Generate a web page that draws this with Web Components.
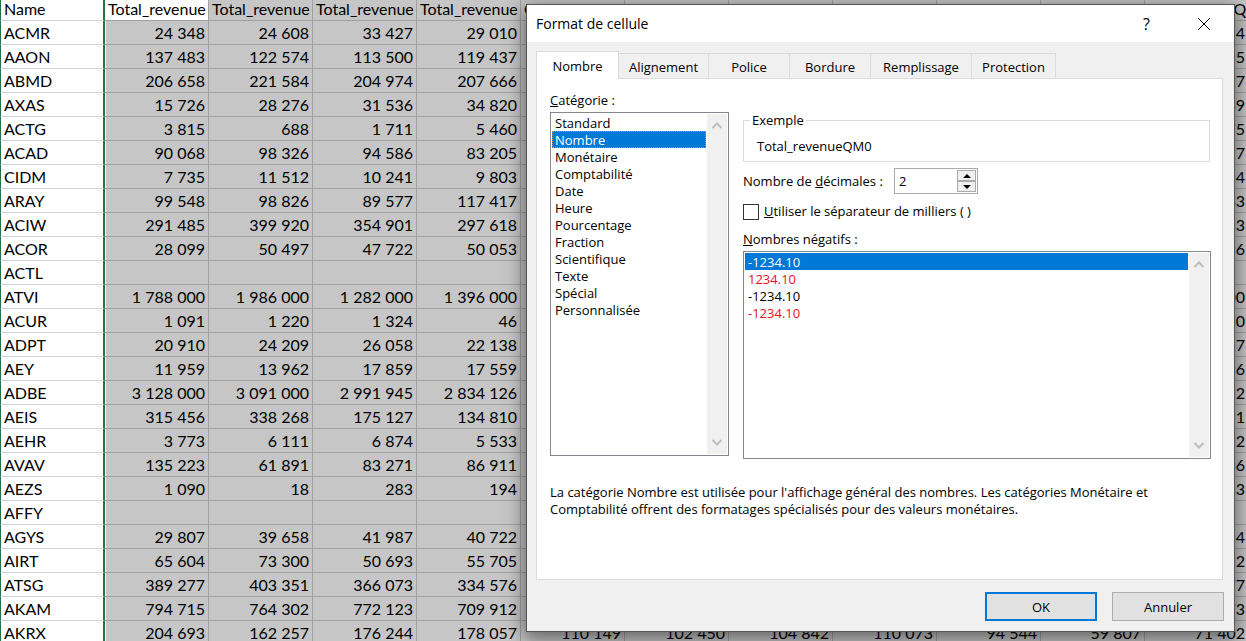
<!DOCTYPE html>
<html lang="fr">
<head>
<meta charset="utf-8">
<title>Format de cellule</title>
<style>
  html, body { height: 100%; margin: 0; overflow: hidden; }
  body { position: relative; background: #c6c6c6; color: #000; font-family: "Open Sans", "Noto Sans", sans-serif; }
</style>
</head>
<body>
<data-sheet></data-sheet>
<format-dialog>
  <span slot="title">Format de cellule</span>
  <tab-strip slot="tabs" labels="Nombre,Alignement,Police,Bordure,Remplissage,Protection"></tab-strip>
  <list-box slot="side" style="--list-height: 344px">
    <span slot="label"><u>C</u>atégorie :</span>
    <option>Standard</option><option selected class="dotted">Nombre</option><option>Monétaire</option>
    <option>Comptabilité</option><option>Date</option><option>Heure</option><option>Pourcentage</option>
    <option>Fraction</option><option>Scientifique</option><option>Texte</option><option>Spécial</option>
    <option>Personnalisée</option>
  </list-box>
  <group-box legend="Exemple">Total_revenueQM0</group-box>
  <number-spinner value="2">Nombre de <u>d</u>écimales :</number-spinner>
  <check-field><u>U</u>tiliser le séparateur de milliers ( )</check-field>
  <list-box style="--list-height: 208px">
    <span slot="label"><u>N</u>ombres négatifs :</span>
    <option selected>-1234.10</option><option class="red">1234.10</option>
    <option>-1234.10</option><option class="red">-1234.10</option>
  </list-box>
  <span slot="note">La catégorie Nombre est utilisée pour l'affichage général des nombres. Les catégories Monétaire et Comptabilité offrent des formatages spécialisés pour des valeurs monétaires.</span>
  <dialog-button slot="actions" primary>OK</dialog-button>
  <dialog-button slot="actions">Annuler</dialog-button>
</format-dialog>

<script>
class Base extends HTMLElement {
  render(html) {
    if (!this.shadowRoot) this.attachShadow({ mode: 'open' });
    this.shadowRoot.innerHTML = html;
  }
}

/* Rows: name, four revenue values, then the end of the last column. */
const ROWS = `ACMR|24 348|24 608|33 427|29 010|54
AAON|137 483|122 574|113 500|119 437|35
ABMD|206 658|221 584|204 974|207 666|97
AXAS|15 726|28 276|31 536|34 820|89
ACTG|3 815|688|1 711|5 460|75
ACAD|90 068|98 326|94 586|83 205|97
CIDM|7 735|11 512|10 241|9 803|54
ARAY|99 548|98 826|89 577|117 417|43
ACIW|291 485|399 920|354 901|297 618|33
ACOR|28 099|50 497|47 722|50 053|36
ACTL|||||
ATVI|1 788 000|1 986 000|1 282 000|1 396 000|00
ACUR|1 091|1 220|1 324|46|0
ADPT|20 910|24 209|26 058|22 138|57
AEY|11 959|13 962|17 859|17 559|36
ADBE|3 128 000|3 091 000|2 991 945|2 834 126|52
AEIS|315 456|338 268|175 127|134 810|91
AEHR|3 773|6 111|6 874|5 533|92
AVAV|135 223|61 891|83 271|86 911|66
AEZS|1 090|18|283|194|33
AFFY|||||
AGYS|29 807|39 658|41 987|40 722|54
AIRT|65 604|73 300|50 693|55 705|52
ATSG|389 277|403 351|366 073|334 576|77
AKAM|794 715|764 302|772 123|709 912|73`.split('\n').map(r => {
  const c = r.split('|');
  return [...c.slice(0, 5), '', '', '', '', '', '', c[5]];
});
ROWS.push(['AKRX', '204 693', '162 257', '176 244', '178 057', '110 149', '102 450', '104 842', '110 073', '94 544', '59 807', '71 402']);
const HEAD = ['Name', ...Array(4).fill('Total_revenue'), ...Array(4).fill('Cost_of_reven'), ...Array(3).fill('Gross_profitQ')];

customElements.define('data-sheet', class extends Base {
  connectedCallback() {
    const row = (cells, first) => '<tr>' + cells.map((c, i) =>
      first || i === 0 ? `<th scope="${first ? 'col' : 'row'}">${c}</th>` : `<td>${c}</td>`).join('') + '</tr>';
    this.render(`<style>
      :host { display: block; height: 100%; overflow: hidden; font: 16px/20px Lato, "Noto Sans", sans-serif; }
      table { table-layout: fixed; width: 1249px; border-collapse: separate; border-spacing: 0; }
      col { width: 104px; } col:first-child { width: 105px; }
      th, td { box-sizing: border-box; height: 24px; padding: 0 3px; font-weight: 400; text-align: right;
        white-space: nowrap; overflow: hidden; background: #c6c6c6;
        border-right: 1px solid #a0a0a0; border-bottom: 1px solid #a0a0a0; }
      thead th { height: 21px; text-align: left; line-height: 18px; padding-bottom: 2px; }
      th:first-child { text-align: left; background: #fff;
        border-left: 1px solid #217346; border-right: 2px solid #217346; border-bottom-color: #d2d2d2; }
      :is(th, td):nth-child(2) { box-shadow: inset 1px 0 #fff; }
      thead th:nth-child(2) { background: #fff; }
    </style>
    <table><colgroup>${HEAD.map(() => '<col>').join('')}</colgroup>
    <thead>${row(HEAD, true)}</thead><tbody>${ROWS.map(r => row(r)).join('')}</tbody></table>`);
  }
});

customElements.define('format-dialog', class extends Base {
  connectedCallback() {
    this.render(`<style>
      :host { position: absolute; left: 526px; right: 11px; top: 4px; box-sizing: border-box; display: block;
        border: 1px solid #555; background: #f0f0f0; font-size: 13px; line-height: 17px;
        box-shadow: 0 5px 18px 2px rgba(0,0,0,.5); }
      header { display: flex; align-items: center; height: 37px; background: #fff; padding: 0 2px 0 9px; }
      h1 { flex: 1; margin: 0; font-size: 14px; font-weight: 400; line-height: 20px; }
      header button { width: 57px; height: 36px; padding: 0; border: 0; background: none; font: 16px/20px "Open Sans", sans-serif; }
      header svg { display: block; margin: auto; }
      main { margin: 9px 11px 0 9px; }
      .panel { box-sizing: border-box; height: 502px; padding: 13px 11px 0 13px; border: 1px solid #dcdcdc; background: #fff; }
      .cols { display: grid; grid-template-columns: 179px 1fr; gap: 14px; }
      .main { display: flex; flex-direction: column; padding-top: 20px; }
      .note { margin: 25px 48px 0 0; }
      footer { display: flex; justify-content: flex-end; gap: 15px; padding: 12px 10px 10px; }
    </style>
    <header><h1><slot name="title"></slot></h1>
      <button aria-label="Aide">?</button>
      <button aria-label="Fermer"><svg width="14" height="14" viewBox="0 0 14 14"><path d="M1 1L13 13M13 1L1 13" stroke="#000" stroke-width="1"/></svg></button>
    </header>
    <main><slot name="tabs"></slot>
      <div class="panel"><div class="cols"><slot name="side"></slot><div class="main"><slot></slot></div></div>
      <div class="note"><slot name="note"></slot></div></div>
    </main>
    <footer><slot name="actions"></slot></footer>`);
  }
});

customElements.define('tab-strip', class extends Base {
  connectedCallback() {
    this.render(`<style>
      :host { display: grid; grid-template-columns: 83px 90px 81px 81px 101px 84px; align-items: end; height: 27px; }
      button { box-sizing: border-box; height: 25px; padding: 2px 0 0; border: 1px solid #dcdcdc; border-width: 1px 1px 0 0;
        background: #f0f0f0; font: inherit; color: inherit; white-space: nowrap; }
      button[aria-selected=true] { position: relative; height: 28px; margin-bottom: -1px; background: #fff; border-left-width: 1px; padding-bottom: 1px; }
    </style>` + this.getAttribute('labels').split(',').map((t, i) =>
      `<button role="tab" aria-selected="${i === 0}">${t}</button>`).join(''));
    this.setAttribute('role', 'tablist');
  }
});

customElements.define('scroll-rail', class extends Base {
  connectedCallback() {
    this.render(`<style>
      :host { display: flex; flex-direction: column; justify-content: space-between; align-items: center;
        width: 20px; box-sizing: border-box; padding: 7px 0; background: #f0f0f0; }
      svg { display: block; }
    </style>
    <svg width="12" height="9" viewBox="0 0 12 9"><path d="M1.5 7L6 2.5L10.500 7" fill="none" stroke="#bdbdbd" stroke-width="2"/></svg>
    <svg width="12" height="9" viewBox="0 0 12 9"><path d="M1.500 2L6 6.500L10.500 2" fill="none" stroke="#bdbdbd" stroke-width="2"/></svg>`);
  }
});

customElements.define('list-box', class extends Base {
  connectedCallback() {
    this.render(`<style>
      :host { display: block; }
      label { display: block; height: 20px; }
      .box { display: flex; box-sizing: border-box; height: var(--list-height); border: 1px solid #828790; background: #fff; padding: 1px; }
      select { flex: 1; min-width: 0; margin: 0 1px 0 0; padding: 0; border: 0; border-radius: 0; outline: 0; background: #fff;
        font: inherit; color: #000; overflow: hidden; scrollbar-width: none; }
      option { height: 17px; min-height: 17px; line-height: 17px; padding: 0 3px; box-sizing: border-box; }
      option:checked { background: linear-gradient(#0078d7, #0078d7); -webkit-text-fill-color: #fff; }
      option.dotted { outline: 1px dotted #d08a3c; outline-offset: -1px; }
      option.red { color: #e81123; }
    </style>
    <label for="list"><slot name="label"></slot></label>
    <div class="box"><select id="list" size="12"></select><scroll-rail></scroll-rail></div>`);
    const list = this.shadowRoot.getElementById('list');
    this.querySelectorAll('option').forEach(o => list.append(o));
  }
});

customElements.define('group-box', class extends Base {
  connectedCallback() {
    this.render(`<style>
      :host { display: block; margin-right: 1px; }
      fieldset { margin: 0; padding: 9px 13px 6px; border: 1px solid #dcdcdc; min-width: 0; }
      legend { padding: 0 2px; margin-left: -7px; }
    </style><fieldset><legend>${this.getAttribute('legend')}</legend><slot></slot></fieldset>`);
  }
});

customElements.define('number-spinner', class extends Base {
  connectedCallback() {
    const arrow = d => `<svg width="8" height="4" viewBox="0 0 8 4"><path d="${d}"/></svg>`;
    this.render(`<style>
      :host { display: flex; align-items: center; margin-top: 6px; }
      label { width: 151px; white-space: nowrap; }
      .field { display: flex; box-sizing: border-box; width: 84px; height: 26px; padding: 1px; border: 1px solid #ababab; background: #fff; }
      input { flex: 1; min-width: 0; border: 0; padding: 0 3px; font: inherit; color: inherit; outline: 0; background: none; }
      .steps { display: grid; width: 19px; grid-template-rows: 1fr 1fr; }
      button { display: grid; place-items: center; padding: 0; min-height: 0; border: 1px solid #ababab; background: #f0f0f0; }
    </style>
    <label for="n"><slot></slot></label>
    <div class="field"><input id="n" type="text" inputmode="numeric" value="${this.getAttribute('value')}">
      <div class="steps"><button aria-label="Augmenter">${arrow('M4 0L8 4H0Z')}</button><button aria-label="Diminuer">${arrow('M0 0H8L4 4Z')}</button></div></div>`);
  }
});

customElements.define('check-field', class extends Base {
  connectedCallback() {
    this.render(`<style>
      :host { display: block; margin: 9px 0 11px; }
      label { display: flex; align-items: center; gap: 5px; }
      input { appearance: none; box-sizing: border-box; width: 16px; height: 16px; margin: 0; border: 1px solid #333; background: #fff; }
    </style><label><input type="checkbox"><span><slot></slot></span></label>`);
  }
});

customElements.define('dialog-button', class extends Base {
  connectedCallback() {
    this.render(`<style>
      :host { display: block; }
      button { display: block; box-sizing: border-box; width: 112px; height: 29px; padding: 2px 0 0; border: 1px solid #adadad;
        background: #e1e1e1; font: inherit; color: inherit; }
      :host([primary]) button { border: 2px solid #0078d7; }
    </style><button><slot></slot></button>`);
  }
});
</script>
</body>
</html>
